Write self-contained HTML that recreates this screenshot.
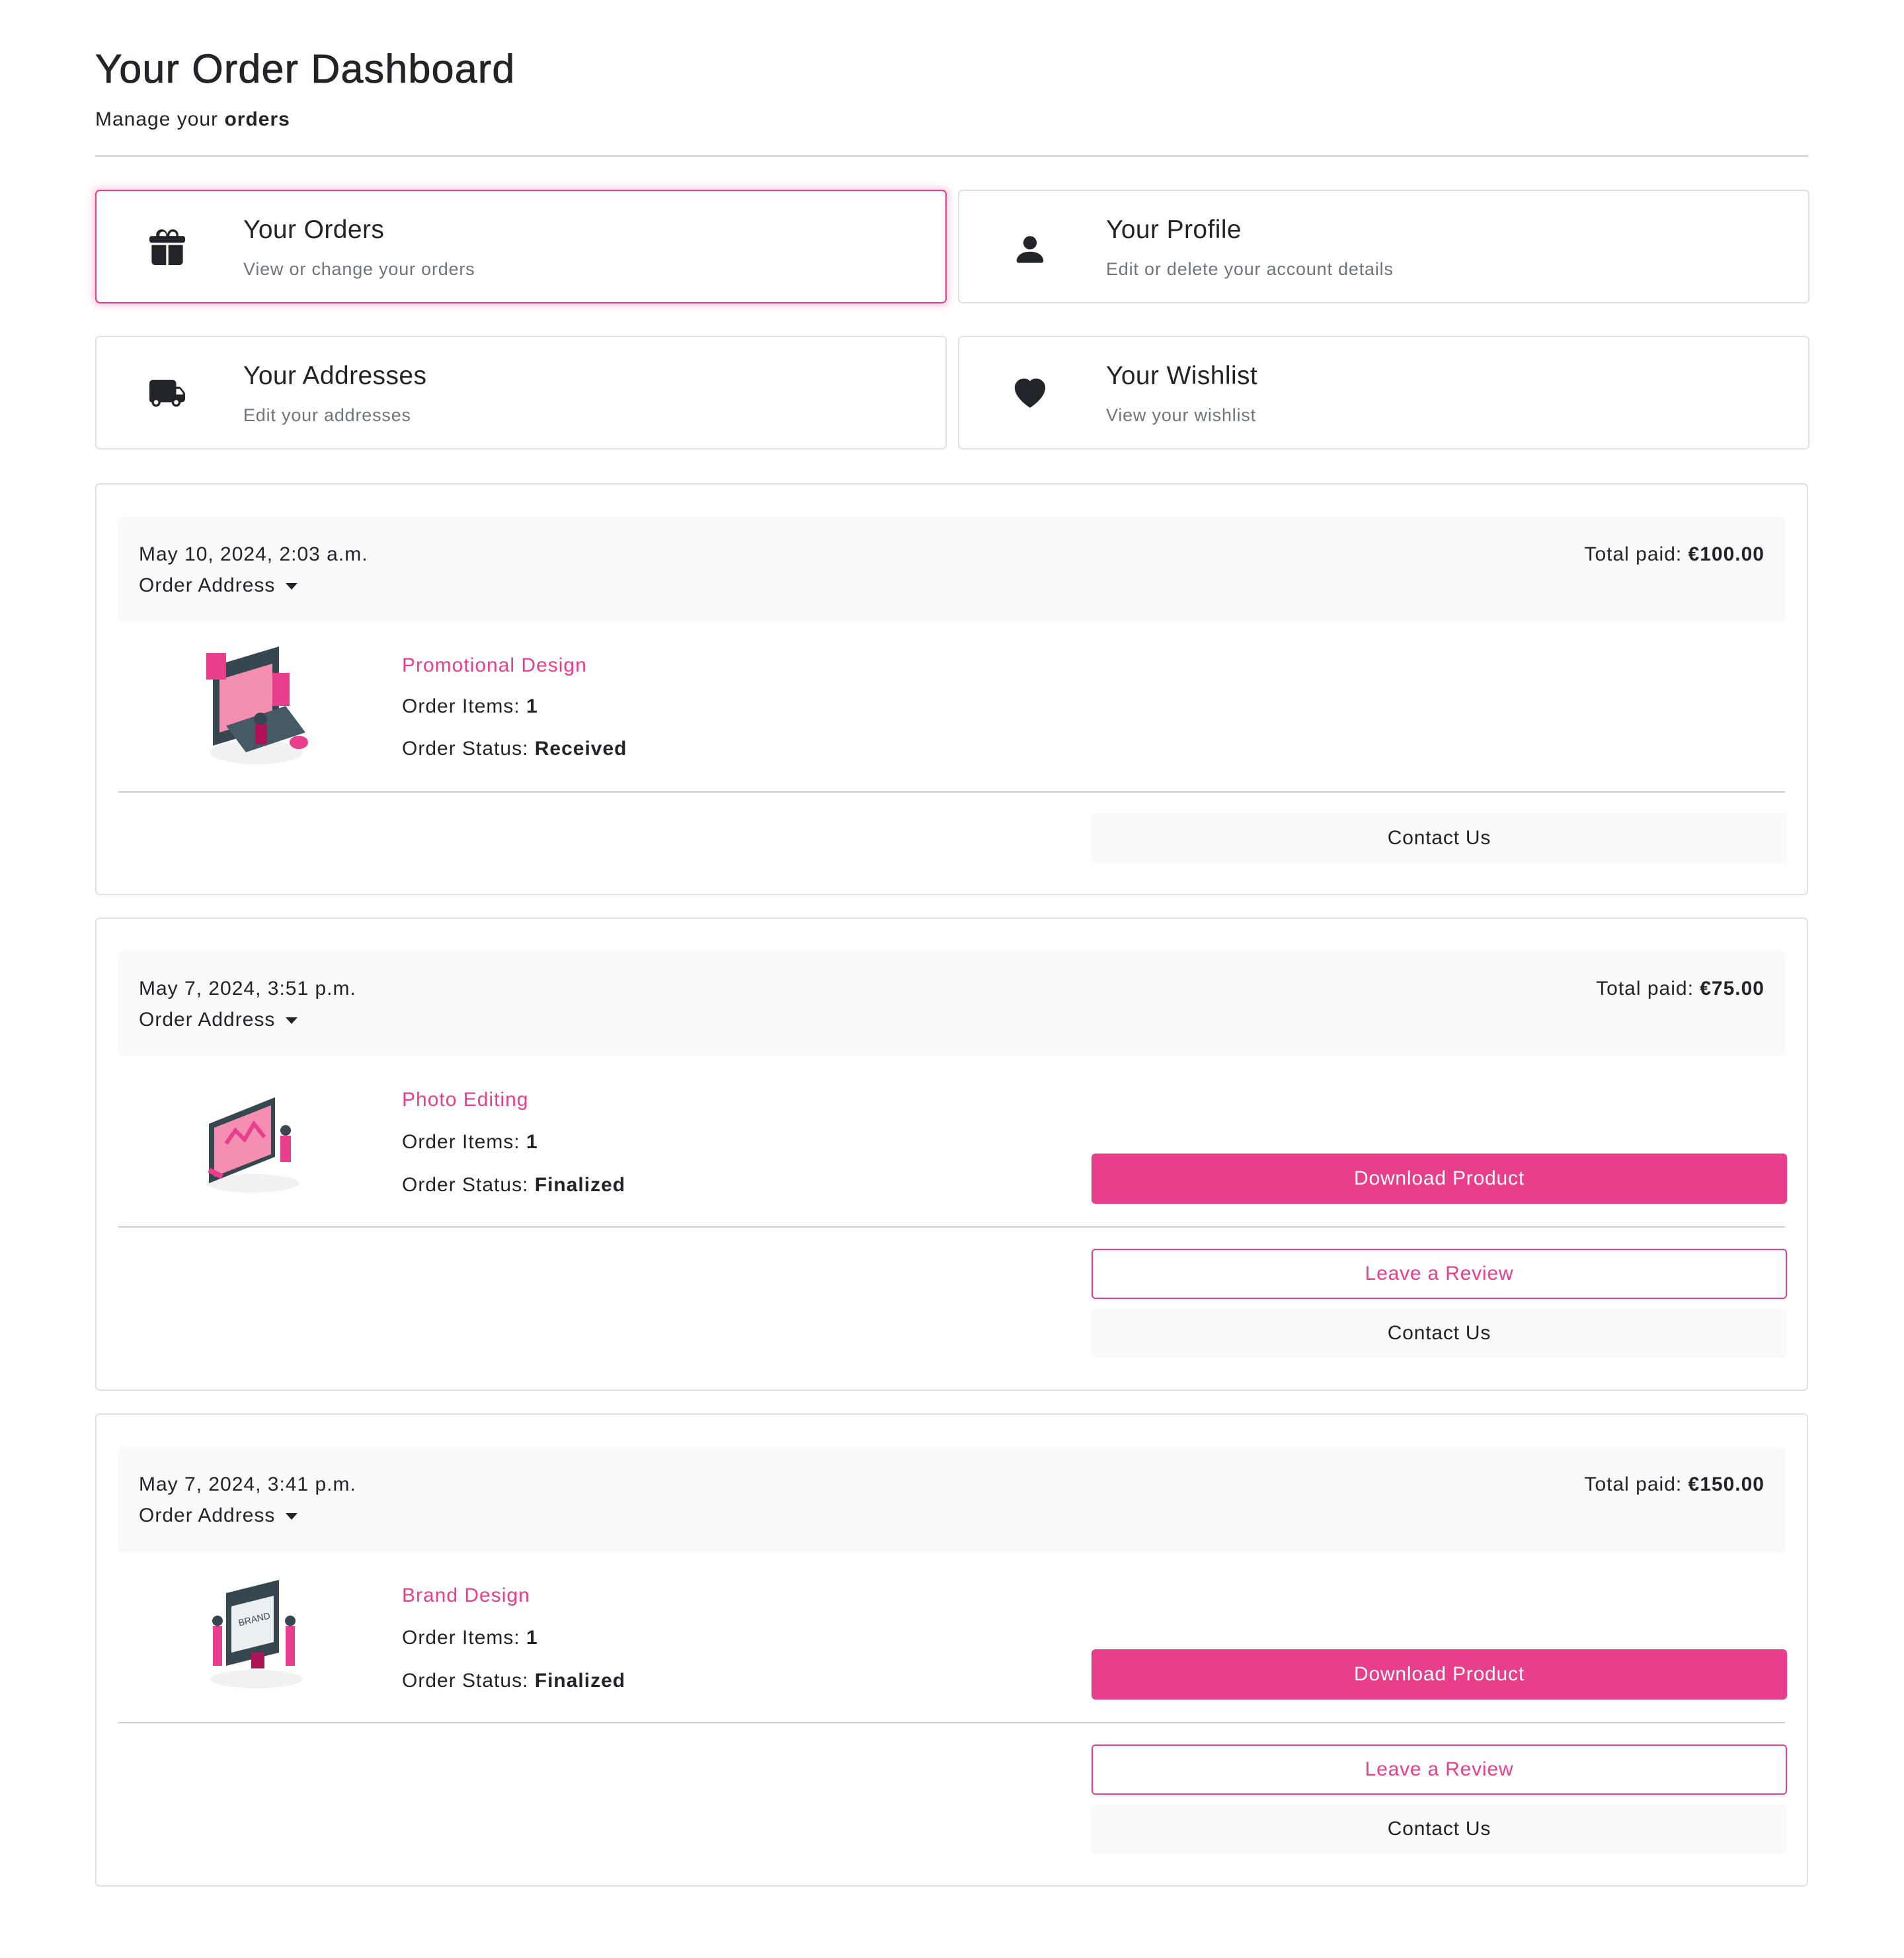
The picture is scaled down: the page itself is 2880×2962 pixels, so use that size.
<!DOCTYPE html>
<html><head><meta charset="utf-8"><style>
*{box-sizing:border-box;margin:0;padding:0}
body{width:2880px;height:2962px;background:#fff;font-family:"Liberation Sans",Arial,sans-serif;color:#212529;position:relative;overflow:hidden}
.a{position:absolute}
.t{position:absolute;line-height:40px;white-space:nowrap}
.card{position:absolute;border:2px solid #dee2e6;border-radius:7px;background:#fff}
.nav{height:172px;width:1288px}
.nav .ic{position:absolute;left:80px;top:58px;width:54px;height:54px}
.nav .h{left:222px;top:36px;font-size:39px;line-height:46px;letter-spacing:0.4px}
.nav .s{left:222px;top:98px;font-size:27px;color:#6c757d;letter-spacing:0.8px}
.ord{left:144px;width:2591px}
.hd{position:absolute;left:33px;right:33px;top:49px;height:159px;background:#f8f9fa;border-radius:6px}
.f{font-size:30px;letter-spacing:1px}
.pink{color:#e83e8c}
.hr{position:absolute;left:33px;right:33px;height:2px;background:#ccc}
.btn{position:absolute;left:1505px;width:1052px;border-radius:6px;font-size:30px;letter-spacing:0.8px;display:flex;align-items:center;justify-content:center}
.gray{background:#f8f9fa;color:#212529}
.pb{background:#e83e8c;color:#fff}
.ob{border:2px solid #e83e8c;color:#e83e8c;background:#fff}
.car{display:inline-block;width:0;height:0;border-left:9px solid transparent;border-right:9px solid transparent;border-top:10px solid #212529;margin-left:16px;vertical-align:middle}
</style></head><body>
<div class="t" style="left:144px;top:72px;font-size:61px;line-height:64px;letter-spacing:1.2px;-webkit-text-stroke:0.8px #212529">Your Order Dashboard</div>
<div class="t f" style="left:144px;top:161px">Manage your <b>orders</b></div>
<div class="a" style="left:144px;top:235px;width:2591px;height:2px;background:#ccc"></div>

<div class="card nav" style="left:144px;top:287px;border-color:#e83e8c;box-shadow:0 0 10px 4px rgba(232,62,140,.25)">
<svg class="ic" viewBox="0 0 16 16"><path fill="#212529" d="M3 2.5a2.5 2.5 0 0 1 5 0 2.5 2.5 0 0 1 5 0v.01c0 .07 0 .27-.04.49H15a1 1 0 0 1 1 1v1a1 1 0 0 1-1 1H1a1 1 0 0 1-1-1V4a1 1 0 0 1 1-1h2.04A2.7 2.7 0 0 1 3 2.5zm1.070.5H7.5v-.5a1.5 1.5 0 1 0-3 0c0 .08 0 .28.07.5zM8.5 3h3.43c.07-.22.07-.42.07-.5a1.5 1.5 0 1 0-3 0V3zM15 7v7.5a1.5 1.5 0 0 1-1.5 1.5H8.5V7H15zM7.5 16h-5A1.5 1.5 0 0 1 1 14.5V7h6.5v9z"/></svg>
<div class="t h">Your Orders</div><div class="t s">View or change your orders</div></div>
<div class="card nav" style="left:1449px;top:287px">
<svg class="ic" viewBox="0 0 16 16"><path fill="#212529" d="M3 15s-1 0-1-1 1-4 6-4 6 3 6 4-1 1-1 1H3zm5-6a3 3 0 1 0 0-6 3 3 0 0 0 0 6z"/></svg>
<div class="t h">Your Profile</div><div class="t s">Edit or delete your account details</div></div>
<div class="card nav" style="left:144px;top:508px">
<svg class="ic" viewBox="0 0 16 16"><path fill="#212529" d="M0 3.5A1.5 1.5 0 0 1 1.5 2h9A1.5 1.5 0 0 1 12 3.5V5h1.02a1.5 1.5 0 0 1 1.17.56l1.48 1.85a1.5 1.5 0 0 1 .33.94V10.5A1.5 1.5 0 0 1 14.5 12H14a2 2 0 1 1-4 0H5a2 2 0 1 1-4 0 1 1 0 0 1-1-1v-7.5zm12 2.5v2.5h3v-.65l-1.45-1.85H12zM3 11a1 1 0 1 0 0 2 1 1 0 0 0 0-2zm9 0a1 1 0 1 0 0 2 1 1 0 0 0 0-2z"/></svg>
<div class="t h">Your Addresses</div><div class="t s">Edit your addresses</div></div>
<div class="card nav" style="left:1449px;top:508px">
<svg class="ic" viewBox="0 0 16 16"><path fill="#212529" d="M8 2.5C11.8-1.4 21.3 5.4 8 14.5-5.3 5.4 4.2-1.4 8 2.5z"/></svg>
<div class="t h">Your Wishlist</div><div class="t s">View your wishlist</div></div>

<!-- order 1 -->
<div class="card ord" style="top:731px;height:623px">
<div class="hd"></div>
<div class="t f" style="left:64px;top:86px">May 10, 2024, 2:03 a.m.</div>
<div class="t f" style="left:64px;top:133px">Order Address<span class="car"></span></div>
<div class="t f" style="right:64px;top:86px">Total paid: <b>€100.00</b></div>
<svg class="a" style="left:156px;top:245px" width="172" height="180" viewBox="0 0 172 180"><ellipse cx="86" cy="160" rx="70" ry="18" fill="#f1f1f1"/><path d="M20 30l100-30v120l-100 30z" fill="#37474f"/><path d="M30 50l80-24v80l-80 24z" fill="#f48fb1"/><rect x="10" y="10" width="30" height="40" fill="#e83e8c"/><rect x="110" y="40" width="26" height="50" fill="#e83e8c"/><path d="M40 120l90-30 30 40-90 30z" fill="#455a64"/><circle cx="92" cy="110" r="10" fill="#37474f"/><rect x="84" y="118" width="18" height="30" fill="#ad1457"/><ellipse cx="150" cy="145" rx="14" ry="10" fill="#e83e8c"/></svg>
<div class="t f pink" style="left:462px;top:254px">Promotional Design</div>
<div class="t f" style="left:462px;top:316px">Order Items: <b>1</b></div>
<div class="t f" style="left:462px;top:380px">Order Status: <b>Received</b></div>
<div class="hr" style="top:464px"></div>
<div class="btn gray" style="top:497px;height:76px">Contact Us</div>
</div>

<!-- order 2 -->
<div class="card ord" style="top:1388px;height:716px">
<div class="hd"></div>
<div class="t f" style="left:64px;top:86px">May 7, 2024, 3:51 p.m.</div>
<div class="t f" style="left:64px;top:133px">Order Address<span class="car"></span></div>
<div class="t f" style="right:64px;top:86px">Total paid: <b>€75.00</b></div>
<svg class="a" style="left:156px;top:250px" width="172" height="170" viewBox="0 0 172 170"><ellipse cx="80" cy="150" rx="70" ry="14" fill="#f1f1f1"/><path d="M14 60l100-40v90l-100 40z" fill="#37474f"/><path d="M22 66l86-34v74l-86 34z" fill="#f48fb1"/><path d="M40 90l14-20 14 14 14-24 16 20" stroke="#e83e8c" stroke-width="6" fill="none"/><circle cx="130" cy="70" r="8" fill="#37474f"/><rect x="122" y="78" width="16" height="40" fill="#e83e8c"/><path d="M14 130l20 10" stroke="#e83e8c" stroke-width="8"/></svg>
<div class="t f pink" style="left:462px;top:254px">Photo Editing</div>
<div class="t f" style="left:462px;top:318px">Order Items: <b>1</b></div>
<div class="t f" style="left:462px;top:383px">Order Status: <b>Finalized</b></div>
<div class="btn pb" style="top:355px;height:76px">Download Product</div>
<div class="hr" style="top:465px"></div>
<div class="btn ob" style="top:499px;height:76px">Leave a Review</div>
<div class="btn gray" style="top:590px;height:74px">Contact Us</div>
</div>

<!-- order 3 -->
<div class="card ord" style="top:2138px;height:716px">
<div class="hd"></div>
<div class="t f" style="left:64px;top:86px">May 7, 2024, 3:41 p.m.</div>
<div class="t f" style="left:64px;top:133px">Order Address<span class="car"></span></div>
<div class="t f" style="right:64px;top:86px">Total paid: <b>€150.00</b></div>
<svg class="a" style="left:156px;top:250px" width="172" height="170" viewBox="0 0 172 170"><ellipse cx="86" cy="150" rx="70" ry="14" fill="#f1f1f1"/><path d="M40 20l80-20v110l-80 20z" fill="#37474f"/><path d="M48 40l64-16v70l-64 16z" fill="#eceff1"/><text x="60" y="70" font-size="14" font-family="Liberation Sans" fill="#37474f" transform="rotate(-14 60 70)">BRAND</text><rect x="20" y="70" width="14" height="60" fill="#e83e8c"/><rect x="130" y="70" width="14" height="60" fill="#e83e8c"/><circle cx="27" cy="62" r="8" fill="#37474f"/><circle cx="137" cy="62" r="8" fill="#37474f"/><rect x="78" y="110" width="20" height="24" fill="#ad1457"/></svg>
<div class="t f pink" style="left:462px;top:254px">Brand Design</div>
<div class="t f" style="left:462px;top:318px">Order Items: <b>1</b></div>
<div class="t f" style="left:462px;top:383px">Order Status: <b>Finalized</b></div>
<div class="btn pb" style="top:355px;height:76px">Download Product</div>
<div class="hr" style="top:465px"></div>
<div class="btn ob" style="top:499px;height:76px">Leave a Review</div>
<div class="btn gray" style="top:590px;height:74px">Contact Us</div>
</div>
</body></html>
